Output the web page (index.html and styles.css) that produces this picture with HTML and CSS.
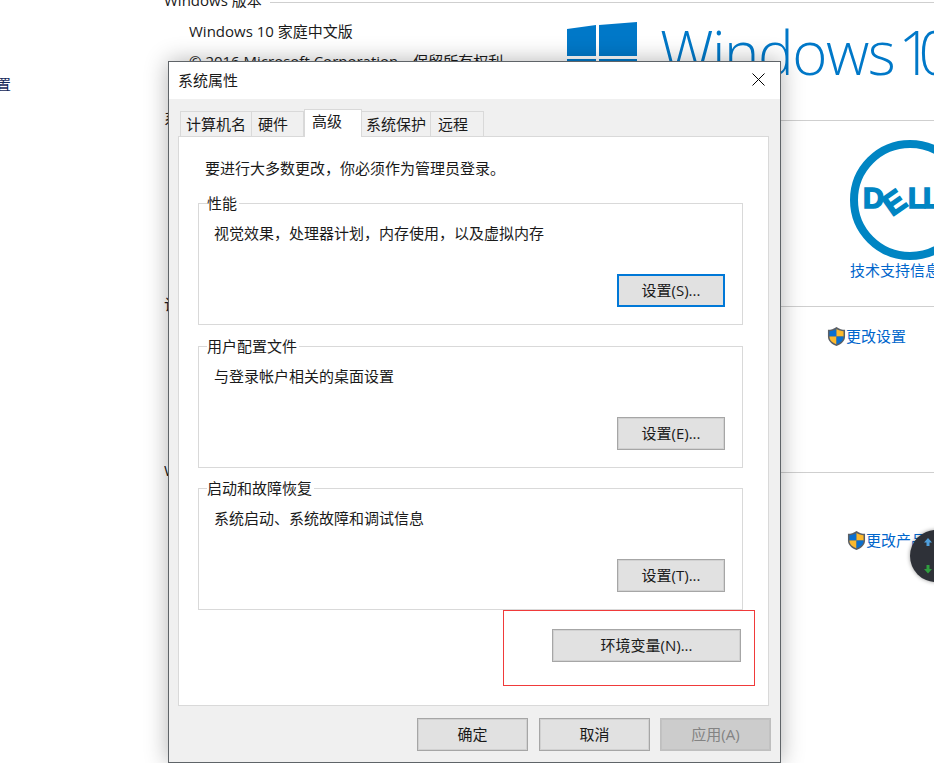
FILE: index.html
```html
<html>
<head>
    <meta charset="UTF-8">
    <title>系统属性</title>
    <link rel="stylesheet" href="styles.css">
</head>
<body>
    <div class="side-nav">置</div>

    <div class="settings-page">
        <section class="sec sec-edition">
            <div class="sec-head"><span>Windows 版本</span></div>
            <div class="edition-row">
                <div class="edition-text">
                    <p>Windows 10 家庭中文版</p>
                    <p>© 2016 Microsoft Corporation。保留所有权利。</p>
                </div>
                <svg class="win-logo" width="70" height="70" viewBox="0 0 70 70">
                    <polygon fill="#0078c8" points="0,7 29,3 29,34 0,34"></polygon>
                    <polygon fill="#0078c8" points="32,3 70,0 70,34 32,34"></polygon>
                    <polygon fill="#0078c8" points="0,37 29,37 29,66 0,62"></polygon>
                    <polygon fill="#0078c8" points="32,37 70,37 70,70 32,67"></polygon>
                </svg>
                <span class="win-name">Windows <span class="win-one">1</span>0</span>
            </div>
        </section>

        <section class="sec sec-system">
            <div class="sec-head"><span>系统</span></div>
            <div class="dell-box">
                <svg class="dell-logo" width="120" height="120" viewBox="0 0 120 120">
                    <circle cx="60" cy="60" r="56" fill="none" stroke="#0085c3" stroke-width="8"></circle>
                    <text class="dell-letter" x="13" y="68">D</text>
                    <text class="dell-letter dell-e" transform="translate(42 77) rotate(-35)">E</text>
                    <text class="dell-letter" x="58" y="68">L</text>
                    <text class="dell-letter" x="73" y="68">L</text>
                </svg>
                <a class="link">技术支持信息</a>
            </div>
        </section>

        <section class="sec sec-computer">
            <div class="sec-head"><span>计算机名、域和工作组设置</span></div>
            <a class="link shield-link">
                <svg class="shield" width="19" height="19" viewBox="0 0 20 20">
                    <path fill="#5a5f66" d="M10 0 C7 2 4 3 1 3 V10 C1 15 5 18 10 20 C15 18 19 15 19 10 V3 C16 3 13 2 10 0Z"></path>
                    <path fill="#0a6fd0" d="M10 2 C7.6 3.4 5.2 4.2 2.6 4.5 V10 H10Z"></path>
                    <path fill="#fdb92c" d="M10 2 C12.4 3.4 14.8 4.2 17.4 4.5 V10 H10Z"></path>
                    <path fill="#fdb92c" d="M2.6 10 H10 V18.2 C6 16.6 2.6 14.4 2.6 10Z"></path>
                    <path fill="#0a6fd0" d="M17.4 10 H10 V18.2 C14 16.6 17.4 14.4 17.4 10Z"></path>
                </svg>更改设置</a>
        </section>

        <section class="sec sec-activate">
            <div class="sec-head"><span>Windows 激活</span></div>
            <a class="link shield-link">
                <svg class="shield" width="19" height="19" viewBox="0 0 20 20">
                    <path fill="#5a5f66" d="M10 0 C7 2 4 3 1 3 V10 C1 15 5 18 10 20 C15 18 19 15 19 10 V3 C16 3 13 2 10 0Z"></path>
                    <path fill="#0a6fd0" d="M10 2 C7.6 3.4 5.2 4.2 2.6 4.5 V10 H10Z"></path>
                    <path fill="#fdb92c" d="M10 2 C12.4 3.4 14.8 4.2 17.4 4.5 V10 H10Z"></path>
                    <path fill="#fdb92c" d="M2.6 10 H10 V18.2 C6 16.6 2.6 14.4 2.6 10Z"></path>
                    <path fill="#0a6fd0" d="M17.4 10 H10 V18.2 C14 16.6 17.4 14.4 17.4 10Z"></path>
                </svg>更改产品密钥</a>
        </section>
    </div>

    <div class="speed-ball">
        <svg width="8" height="36" viewBox="0 0 8 36">
            <path fill="#4f9fdc" d="M4 0 L8 4.5 H5.5 V8 H2.5 V4.5 H0Z"></path>
            <path fill="#2f9e3f" d="M2.5 27 H5.5 V31 H8 L4 35.5 L0 31 H2.5Z"></path>
        </svg>
    </div>

    <div class="dialog">
        <div class="title-bar">
            <span>系统属性</span>
            <svg class="close-x" width="13" height="13" viewBox="0 0 13 13">
                <path d="M0.5 0.5 L12.5 12.5 M12.5 0.5 L0.5 12.5" stroke="#000" stroke-width="1" fill="none"></path>
            </svg>
        </div>
        <div class="dialog-body">
            <div class="tabs">
                <div class="tab tab-name">计算机名</div>
                <div class="tab tab-hw">硬件</div>
                <div class="tab tab-active">高级</div>
                <div class="tab tab-protect">系统保护</div>
                <div class="tab tab-remote">远程</div>
            </div>
            <div class="tab-panel">
                <p class="intro">要进行大多数更改，你必须作为管理员登录。</p>

                <div class="group">
                    <span class="group-title">性能</span>
                    <p class="group-desc">视觉效果，处理器计划，内存使用，以及虚拟内存</p>
                    <button class="btn btn-set btn-focus">设置(S)...</button>
                </div>
                <div class="group">
                    <span class="group-title">用户配置文件</span>
                    <p class="group-desc">与登录帐户相关的桌面设置</p>
                    <button class="btn btn-set">设置(E)...</button>
                </div>
                <div class="group">
                    <span class="group-title">启动和故障恢复</span>
                    <p class="group-desc">系统启动、系统故障和调试信息</p>
                    <button class="btn btn-set">设置(T)...</button>
                </div>

                <div class="env-row">
                    <button class="btn btn-env">环境变量(N)...</button>
                </div>
            </div>
            <div class="dialog-actions">
                <button class="btn btn-action">确定</button>
                <button class="btn btn-action">取消</button>
                <button class="btn btn-action btn-disabled">应用(A)</button>
            </div>
        </div>
        <div class="red-mark"></div>
    </div>
</body>
</html>
```

FILE: styles.css
```css
body {
    margin: 0;
    width: 934px;
    height: 763px;
    overflow: hidden;
    position: relative;
    background: white;
    color: #1a1a1a;
    font-family: "Open Sans", "Noto Sans CJK SC", sans-serif;
    font-size: 15px;
}

p {
    margin: 0;
}

.side-nav {
    position: absolute;
    left: -4px;
    top: 73px;
    color: #14285a;
}

/* page behind the dialog */
.settings-page {
    padding-left: 164px;
    margin-top: -9px;
}

.sec {
    overflow: hidden;
}

.sec-head {
    display: flex;
    align-items: center;
    height: 22px;
    line-height: 22px;
}

.sec-head span {
    margin-top: -5px;
}

.sec-head::after {
    content: "";
    flex: 1;
    height: 1px;
    margin-left: 8px;
    background: #cfcfcf;
}

.sec-edition {
    height: 118px;
}

.edition-row {
    display: flex;
    padding-left: 25px;
}

.edition-text {
    width: 378px;
    flex: none;
    line-height: 30px;
    padding-top: 3px;
    white-space: nowrap;
}

.win-logo {
    margin-top: 9px;
    flex: none;
}

.win-name {
    margin-left: 23px;
    margin-top: 3px;
    font-size: 60px;
    line-height: 72px;
    font-weight: 300;
    color: #0078c8;
    white-space: nowrap;
    letter-spacing: -1.5px;
    word-spacing: -10px;
}

.win-one {
    letter-spacing: -14px;
}

.sec-system {
    height: 186px;
}

.dell-box {
    display: flex;
    flex-direction: column;
    margin-left: 686px;
    width: 120px;
    margin-top: 9px;
}

.dell-logo {
    overflow: visible;
    flex: none;
}

.dell-letter {
    font-family: "Liberation Sans", sans-serif;
    font-weight: bold;
    font-size: 29px;
    fill: #0085c3;
    stroke: #0085c3;
    stroke-width: 1.5px;
}

.dell-e {
    font-size: 31px;
}

.link {
    color: #0066cc;
    white-space: nowrap;
    line-height: 20px;
}

.sec-computer {
    height: 166px;
}

.sec-computer .shield-link {
    margin-left: 663px;
    margin-top: 9px;
}

.sec-activate {
    height: 120px;
}

.sec-activate .shield-link {
    margin-left: 683px;
    margin-top: 47px;
}

.shield-link {
    display: flex;
    align-items: center;
}

.shield {
    flex: none;
}

.speed-ball {
    position: absolute;
    left: 910px;
    top: 530px;
    width: 52px;
    height: 52px;
    border-radius: 50%;
    background: #2e3138;
    box-shadow: 0 0 4px rgba(0,0,0,0.4);
}

.speed-ball svg {
    position: absolute;
    left: 14px;
    top: 8px;
}

/* dialog */
.dialog {
    position: absolute;
    left: 168px;
    top: 61px;
    width: 613px;
    height: 702px;
    box-sizing: border-box;
    border: 1px solid #5f6468;
    background: #f0f0f0;
    box-shadow: 0 0 22px rgba(0,0,0,0.3);
}

.title-bar {
    display: flex;
    align-items: center;
    justify-content: space-between;
    height: 35px;
    padding: 0 15px 2px 9px;
    background: white;
}

.dialog-body {
    padding: 10px 11px 0 9px;
}

.tabs {
    display: flex;
    align-items: flex-end;
    height: 28px;
    padding-left: 2px;
    margin-bottom: -1px;
    position: relative;
}

.tab {
    box-sizing: border-box;
    height: 26px;
    padding-left: 5px;
    line-height: 24px;
    border: 1px solid #d9d9d9;
    border-left: none;
    white-space: nowrap;
}

.tab-name {
    width: 72px;
    border-left: 1px solid #d9d9d9;
}

.tab-hw {
    width: 52px;
    padding-left: 6px;
}

.tab-active {
    width: 58px;
    height: 28px;
    padding-left: 7px;
    line-height: 22px;
    background: white;
    border-left: 1px solid #d9d9d9;
    border-bottom: none;
    position: relative;
    z-index: 1;
}

.tab-protect {
    width: 69px;
    padding-left: 4px;
}

.tab-remote {
    width: 53px;
    padding-left: 7px;
}

.tab-panel {
    box-sizing: border-box;
    height: 570px;
    padding: 18px 25px 0 19px;
    background: white;
    border: 1px solid #d9d9d9;
}

.intro {
    margin-left: 7px;
    line-height: 26px;
    margin-bottom: 22px;
}

.group {
    box-sizing: border-box;
    height: 122px;
    display: flex;
    flex-direction: column;
    align-items: flex-start;
    padding: 0 17px 17px 15px;
    margin-bottom: 20px;
    border: 1px solid #d9d9d9;
}

.intro + .group {
    margin-bottom: 21px;
}

.group-title {
    margin: -11px 0 0 -7px;
    padding-right: 2px;
    line-height: 20px;
    background: white;
}

.group-desc {
    margin-top: 10px;
    line-height: 20px;
}

.btn {
    box-sizing: border-box;
    height: 33px;
    padding: 0 0 2px;
    background: #e1e1e1;
    border: 1px solid #a6a6a6;
    box-shadow: inset 0 0 0 1px rgba(173,173,173,0.3);
    color: #1a1a1a;
    font-family: inherit;
    font-size: 15px;
}

.btn-set {
    width: 108px;
    margin-top: auto;
    align-self: flex-end;
}

.btn-focus {
    border: 2px solid #0078d7;
    box-shadow: none;
}

.env-row {
    display: flex;
    justify-content: flex-end;
    margin-top: -1px;
    padding-right: 2px;
}

.btn-env {
    width: 189px;
}

.dialog-actions {
    display: flex;
    justify-content: flex-end;
    gap: 11px;
    margin-top: 12px;
    margin-right: -2px;
}

.btn-action {
    width: 111px;
}

.btn-disabled {
    margin-left: -1px;
    background: #cccccc;
    border-color: #bfbfbf;
    color: #838383;
}

.red-mark {
    position: absolute;
    left: 334px;
    top: 548px;
    width: 250px;
    height: 74px;
    border: 1px solid #f03a3a;
}
```
